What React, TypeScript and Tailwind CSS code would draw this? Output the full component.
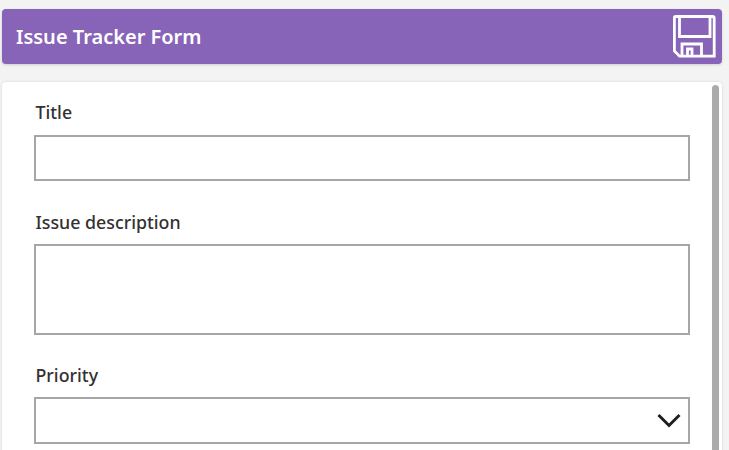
export default function App() {
  const label = "block text-[17.8px] leading-[24px] font-medium text-[#323130] pl-[1.5px]";
  const input = "block w-full border-2 border-[#a6a6a6] bg-white";
  return (
    <div className="h-[450px] w-[729px] overflow-hidden bg-[#f3f3f3] pl-[2px] pr-[7px] pt-[9px] font-['Noto_Sans','Open_Sans',sans-serif]">
      <header className="flex h-[55px] items-center justify-between rounded-[4px] bg-[#8764b8] pl-[14px] pr-[6px] shadow-[0_1px_3px_rgba(0,0,0,0.15)]">
        <h1 className="text-[20px] font-semibold leading-[28px] text-white">Issue Tracker Form</h1>
        <svg width="43" height="43" viewBox="0 0 43 43" fill="none" stroke="white" strokeWidth="2.8" aria-label="Save">
          <path d="M2.5 1.5H39.5Q41.2 1.5 41.2 3.2V41.2H6.5L1.4 36V2.8Q1.4 1.5 2.5 1.5Z" />
          <path d="M6.5 1.5V21.5H37V1.5" />
          <path d="M9 41.2V29H28.5V41.2" />
          <path d="M14.5 41.2V34H19V41.2" />
        </svg>
      </header>
      <main className="relative mt-[18px] h-[400px] rounded-t-[4px] bg-white pl-[32px] pr-[32px] pt-[18px] shadow-[0_0_3px_rgba(0,0,0,0.12)]">
        <label className={`${label} mb-[11px]`}>Title</label>
        <input className={`${input} h-[46px]`} />
        <label className={`${label} mb-[10px] mt-[29px]`}>Issue description</label>
        <textarea className={`${input} h-[91px] resize-none`} />
        <label className={`${label} mb-[10px] mt-[28px]`}>Priority</label>
        <div className={`${input} flex h-[47px] items-center justify-end pr-[7px]`}>
          <svg width="24" height="15" viewBox="0 0 24 15" fill="none" stroke="#201f1e" strokeWidth="3">
            <path d="M1.5 2L12 12.5L22.5 2" />
          </svg>
        </div>
        <div className="absolute right-[3px] top-[3px] h-[400px] w-[7px] rounded-t-[4px] bg-[#ababab]" />
      </main>
    </div>
  );
}
